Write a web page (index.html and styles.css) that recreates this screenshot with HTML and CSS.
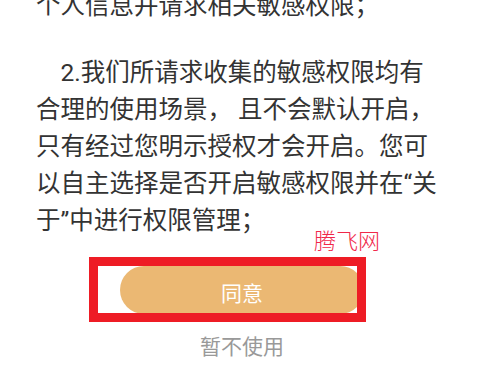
FILE: index.html
```html
<!DOCTYPE html>
<html lang="zh-CN">
<head>
  <meta charset="UTF-8">
  <title>隐私政策</title>
  <meta name="viewport" content="width=device-width, initial-scale=1.0">
  <link rel="stylesheet" href="styles.css">
</head>
<body>

  <div class="content">
    <p>个人信息并请求相关敏感权限；</p>
    <p class="item">2.我们所请求收集的敏感权限均有合理的使用场景， 且不会默认开启，只有经过您明示授权才会开启。您可以自主选择是否开启敏感权限并在“关于”中进行权限管理；</p>
  </div>

  <div class="actions">
    <div class="agree-row">
      <button class="agree">同意</button>
      <span class="mark">腾飞网</span>
      <span class="frame"></span>
    </div>
    <div class="skip">暂不使用</div>
  </div>

</body>
</html>
```

FILE: styles.css
```css
body {
  margin: 0;
  background-color: #fff;
  font-family: Roboto, "Noto Sans CJK SC", sans-serif;
  overflow: hidden;
}

.content {
  margin-top: -13px;
  padding: 0 38px 0 36px;
  color: #333;
  font-size: 24.5px;
  line-height: 37px;
}

.content p {
  margin: 0 0 30px;
}

.content p:last-child {
  margin-bottom: 0;
}

.item {
  text-indent: 1em;
}

.agree-row {
  position: relative;
  padding-top: 27px;
}

.agree {
  display: block;
  margin-left: 120px;
  width: 244px;
  height: 48px;
  padding: 3px 0 0;
  border: none;
  border-radius: 24px;
  background-color: #ebb873;
  color: #fff;
  font-family: inherit;
  font-size: 21px;
}

/* 水印 */
.mark {
  position: absolute;
  top: -8px;
  left: 314px;
  color: #f0284a;
  font-size: 22px;
  line-height: 22px;
  font-weight: 300;
}

/* 红框标注 */
.frame {
  position: absolute;
  top: 18px;
  left: 89px;
  width: 277px;
  height: 65px;
  box-sizing: border-box;
  border: 9px solid #ee1c25;
}

.skip {
  margin: 18px 0 0 120px;
  width: 244px;
  text-align: center;
  color: #999;
  font-size: 21px;
  line-height: 30px;
}
```
